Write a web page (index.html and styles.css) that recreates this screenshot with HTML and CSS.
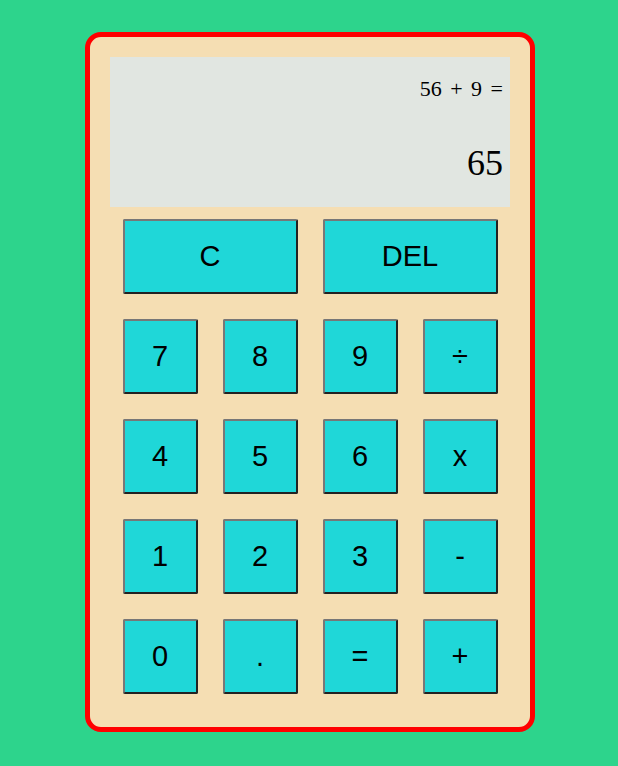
FILE: index.html
```html
<!DOCTYPE html>
<html>
<head>
<meta charset="utf-8">
<link rel="stylesheet" href="styles.css">
</head>
<body>
<div class="calculator">
  <div class="display">
    <div class="previous">56 + 9 =</div>
    <div class="current">65</div>
  </div>
  <div class="keys">
    <button class="key span-two">C</button>
    <button class="key span-two">DEL</button>
    <button class="key">7</button>
    <button class="key">8</button>
    <button class="key">9</button>
    <button class="key">÷</button>
    <button class="key">4</button>
    <button class="key">5</button>
    <button class="key">6</button>
    <button class="key">x</button>
    <button class="key">1</button>
    <button class="key">2</button>
    <button class="key">3</button>
    <button class="key">-</button>
    <button class="key">0</button>
    <button class="key">.</button>
    <button class="key">=</button>
    <button class="key">+</button>
  </div>
</div>
</body>
</html>
```

FILE: styles.css
```css
* { box-sizing: border-box; }
html, body { margin: 0; padding: 0; }
body {
  background: #2dd48c;
  min-height: 766px;
  display: flex;
  justify-content: center;
  align-items: flex-start;
  padding-top: 31.5px;
  padding-left: 2px;
}
.calculator {
  width: 450px;
  height: 700px;
  background: #f5deb3;
  border: 5px solid #ff0000;
  border-radius: 16px;
  padding: 20px;
  display: flex;
  flex-direction: column;
}
.display {
  width: 400px;
  height: 150px;
  background: #e1e6e1;
  display: flex;
  flex-direction: column;
  justify-content: space-between;
  align-items: flex-end;
  padding: 19px 7px 23px;
  font-family: "Liberation Serif", "Times New Roman", serif;
  color: #000;
}
.previous { font-size: 22px; line-height: 25px; word-spacing: 3px; }
.current { font-size: 36px; line-height: 41px; }
.keys {
  display: grid;
  grid-template-columns: repeat(4, 100px);
  grid-auto-rows: 100px;
}
.key {
  margin: 12.5px;
  background: #1fd7d8;
  border-style: solid;
  border-width: 2px;
  border-color: #777 #222 #222 #777;
  border-radius: 2px;
  font-family: "Liberation Sans", Arial, sans-serif;
  font-size: 29px;
  color: #000;
  padding: 0;
}
.span-two { grid-column: span 2; }
```
